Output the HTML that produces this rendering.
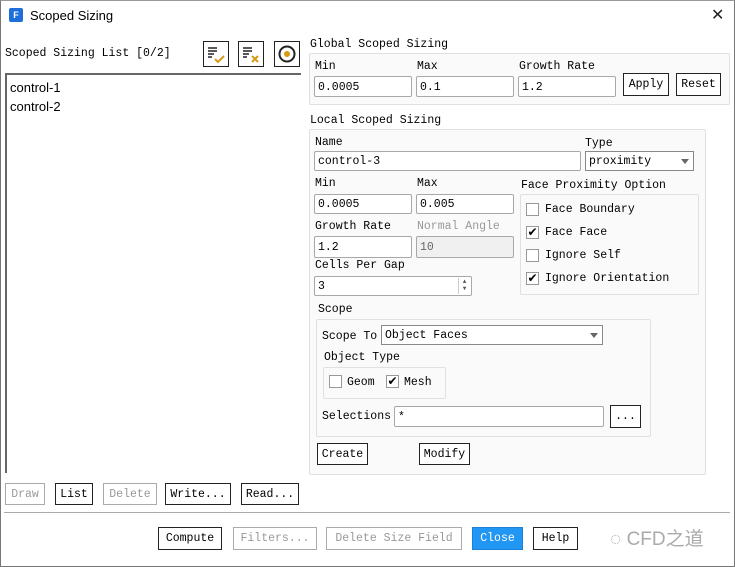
<!DOCTYPE html>
<html><head><meta charset="utf-8"><style>
*{box-sizing:border-box;margin:0;padding:0}
body{width:735px;height:567px;background:#fff;position:relative;overflow:hidden;font-family:"Liberation Mono",monospace;font-size:11.5px;color:#000}
.a{position:absolute;white-space:nowrap}
.in{position:absolute;height:21px;border:1px solid #a8a8a8;border-radius:2px;background:#fff;padding:4px 0 0 3px;font-size:11.5px}
.btn{position:absolute;height:22px;border:1px solid #222;background:#fff;text-align:center;line-height:21px;font-size:11.5px}
.dis{border-color:#aaa;color:#999}
.grp{position:absolute;border:1px solid #e0e0e0;border-radius:2px;background:#fafafa}
.cb{position:absolute;width:13px;height:13px;border:1px solid #999;background:#fff;font-size:12px;line-height:11px;text-align:center;font-family:"DejaVu Sans",sans-serif}
</style></head><body>
<div class="a" style="left:0;top:0;width:735px;height:567px;border:1px solid #777;border-top:1px solid #999"></div>
<div class="a" style="left:9px;top:8px;width:14px;height:14px;background:#1e6fd9;border-radius:2px;color:#fff;font:bold 9px 'Liberation Sans',sans-serif;text-align:center;line-height:14px">F</div>
<div class="a" style="left:30px;top:8px;font:13px 'Liberation Sans',sans-serif">Scoped Sizing</div>
<div class="a" style="left:711px;top:5px;font:16px 'DejaVu Sans',sans-serif;color:#222">✕</div>

<div class="a" style="left:5px;top:47px">Scoped Sizing List [0/2]</div>
<div class="btn" style="left:203px;top:41px;width:26px;height:26px"><svg width="24" height="24" viewBox="0 0 24 24"><path d="M4 6h9M4 9h9M4 12h6M4 15h4" stroke="#222" stroke-width="1.6"/><path d="M11 17l3 3 6-6" stroke="#d89a10" stroke-width="2" fill="none"/></svg></div>
<div class="btn" style="left:238px;top:41px;width:26px;height:26px"><svg width="24" height="24" viewBox="0 0 24 24"><path d="M4 6h9M4 9h9M4 12h6M4 15h4" stroke="#222" stroke-width="1.6"/><path d="M13 14l6 6M19 14l-6 6" stroke="#d89a10" stroke-width="2"/></svg></div>
<div class="btn" style="left:274px;top:41px;width:26px;height:26px"><svg width="24" height="24" viewBox="0 0 24 24"><circle cx="12" cy="12" r="7.5" stroke="#222" stroke-width="2" fill="none"/><circle cx="12" cy="12" r="3" fill="#d89a10"/></svg></div>

<div class="a" style="left:5px;top:73px;width:296px;height:400px;border-top:2px solid #666;border-left:2px solid #666"></div>
<div class="a" style="left:10px;top:78px;font:13px 'Liberation Sans',sans-serif;line-height:19px">control-1<br>control-2</div>

<div class="a" style="left:310px;top:38px">Global Scoped Sizing</div>
<div class="grp" style="left:309px;top:53px;width:421px;height:52px"></div>
<div class="a" style="left:315px;top:60px">Min</div>
<div class="a" style="left:417px;top:60px">Max</div>
<div class="a" style="left:519px;top:60px">Growth Rate</div>
<div class="in" style="left:314px;top:76px;width:98px">0.0005</div>
<div class="in" style="left:416px;top:76px;width:98px">0.1</div>
<div class="in" style="left:518px;top:76px;width:98px">1.2</div>
<div class="btn" style="left:623px;top:73px;width:46px;height:23px">Apply</div>
<div class="btn" style="left:676px;top:73px;width:45px;height:23px">Reset</div>

<div class="a" style="left:310px;top:114px">Local Scoped Sizing</div>
<div class="grp" style="left:309px;top:129px;width:397px;height:346px"></div>
<div class="a" style="left:315px;top:136px">Name</div>
<div class="a" style="left:585px;top:137px">Type</div>
<div class="in" style="left:314px;top:151px;width:267px;height:20px;padding-top:3px">control-3</div>
<div class="in" style="left:585px;top:151px;width:109px;height:20px;padding-top:3px;border-radius:0;border-color:#888">proximity<span style="position:absolute;right:4px;top:7px;border:4px solid transparent;border-top:5px solid #666"></span></div>
<div class="a" style="left:315px;top:177px">Min</div>
<div class="a" style="left:417px;top:177px">Max</div>
<div class="in" style="left:314px;top:194px;width:98px;height:20px;padding-top:3px">0.0005</div>
<div class="in" style="left:416px;top:194px;width:98px;height:20px;padding-top:3px">0.005</div>
<div class="a" style="left:521px;top:179px">Face Proximity Option</div>
<div class="grp" style="left:520px;top:194px;width:179px;height:101px"></div>
<div class="cb" style="left:526px;top:203px"></div><div class="a" style="left:545px;top:203px">Face Boundary</div>
<div class="cb" style="left:526px;top:226px">✔</div><div class="a" style="left:545px;top:226px">Face Face</div>
<div class="cb" style="left:526px;top:249px"></div><div class="a" style="left:545px;top:249px">Ignore Self</div>
<div class="cb" style="left:526px;top:272px">✔</div><div class="a" style="left:545px;top:272px">Ignore Orientation</div>
<div class="a" style="left:315px;top:220px">Growth Rate</div>
<div class="a" style="left:417px;top:220px;color:#999">Normal Angle</div>
<div class="in" style="left:314px;top:236px;width:98px;height:22px">1.2</div>
<div class="in" style="left:416px;top:236px;width:98px;height:22px;background:#f0f0f0;color:#666">10</div>
<div class="a" style="left:315px;top:259px">Cells Per Gap</div>
<div class="in" style="left:314px;top:276px;width:158px;height:20px;padding-top:3px">3<span style="position:absolute;right:1px;top:1px;width:12px;height:16px;border-left:1px solid #ccc;font-size:6px;line-height:7px;text-align:center;color:#555">▲<br>▼</span></div>

<div class="a" style="left:318px;top:303px">Scope</div>
<div class="grp" style="left:316px;top:319px;width:335px;height:118px"></div>
<div class="a" style="left:322px;top:330px">Scope To</div>
<div class="in" style="left:381px;top:325px;width:222px;height:20px;padding-top:3px;border-radius:0;border-color:#888">Object Faces<span style="position:absolute;right:4px;top:7px;border:4px solid transparent;border-top:5px solid #666"></span></div>
<div class="a" style="left:324px;top:351px">Object Type</div>
<div class="grp" style="left:323px;top:367px;width:123px;height:32px"></div>
<div class="cb" style="left:329px;top:375px"></div><div class="a" style="left:347px;top:376px">Geom</div>
<div class="cb" style="left:386px;top:375px">✔</div><div class="a" style="left:404px;top:376px">Mesh</div>
<div class="a" style="left:322px;top:410px">Selections</div>
<div class="in" style="left:394px;top:406px;width:210px;height:21px">*</div>
<div class="btn" style="left:610px;top:405px;width:31px;height:23px">...</div>
<div class="btn" style="left:317px;top:443px;width:51px">Create</div>
<div class="btn" style="left:419px;top:443px;width:51px">Modify</div>

<div class="btn dis" style="left:5px;top:483px;width:40px">Draw</div>
<div class="btn" style="left:55px;top:483px;width:38px">List</div>
<div class="btn dis" style="left:103px;top:483px;width:54px">Delete</div>
<div class="btn" style="left:165px;top:483px;width:66px">Write...</div>
<div class="btn" style="left:241px;top:483px;width:58px">Read...</div>
<div class="a" style="left:4px;top:512px;width:726px;height:1px;background:#aaa"></div>
<div class="btn" style="left:158px;top:527px;width:64px;height:23px">Compute</div>
<div class="btn dis" style="left:233px;top:527px;width:84px;height:23px">Filters...</div>
<div class="btn dis" style="left:326px;top:527px;width:136px;height:23px">Delete Size Field</div>
<div class="btn" style="left:472px;top:527px;width:51px;height:23px;background:#2196f3;border-color:#1a80d8;color:#fff">Close</div>
<div class="btn" style="left:533px;top:527px;width:45px;height:23px">Help</div>
<div class="a" style="left:610px;top:524px;font:19px 'Liberation Sans','Noto Sans CJK SC',sans-serif;color:#aaa">◌ CFD之道</div>
</body></html>
